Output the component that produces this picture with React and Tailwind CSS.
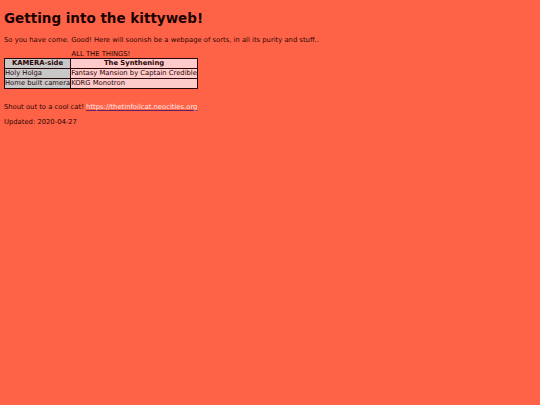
export default function App() {
  return (
    <div className="min-h-[405px] w-[540px] bg-[#ff6347] text-[#2a0505] px-1 pt-[10px]" style={{ fontFamily: '"DejaVu Sans", Verdana, sans-serif' }}>
      <h1 className="text-[13.5px] font-bold leading-[16px] text-[#1a0202]">Getting into the kittyweb!</h1>
      <p className="text-[6.8px] leading-[9px] mt-[10px]">
        So you have come. Good! Here will soonish be a webpage of sorts, in all its purity and stuff..
      </p>
      <table className="mt-[5px] border-collapse text-[6.8px] leading-[9px] border border-[#2a0505]">
        <caption className="text-center leading-[8px]">ALL THE THINGS!</caption>
        <thead>
          <tr>
            <th className="bg-[#c8c8c8] border border-[#2a0505] px-0 font-bold">KAMERA-side</th>
            <th className="bg-[#ffcaca] border border-[#2a0505] px-0 font-bold">The Synthening</th>
          </tr>
        </thead>
        <tbody>
          <tr>
            <td className="bg-[#c8c8c8] border border-[#2a0505] px-0">Holy Holga</td>
            <td className="bg-[#ffcaca] border border-[#2a0505] px-0">Fantasy Mansion by Captain Credible</td>
          </tr>
          <tr>
            <td className="bg-[#c8c8c8] border border-[#2a0505] px-0">Home built camera</td>
            <td className="bg-[#ffcaca] border border-[#2a0505] px-0">KORG Monotron</td>
          </tr>
        </tbody>
      </table>
      <p className="text-[6.8px] leading-[9px] mt-[14px]">
        Shout out to a cool cat!{' '}
        <a href="#" className="text-[#ffeaea] underline decoration-[#6a2060]">https://thetinfoilcat.neocities.org</a>
      </p>
      <p className="text-[6.8px] leading-[9px] mt-[6px]">Updated: 2020-04-27</p>
    </div>
  );
}
